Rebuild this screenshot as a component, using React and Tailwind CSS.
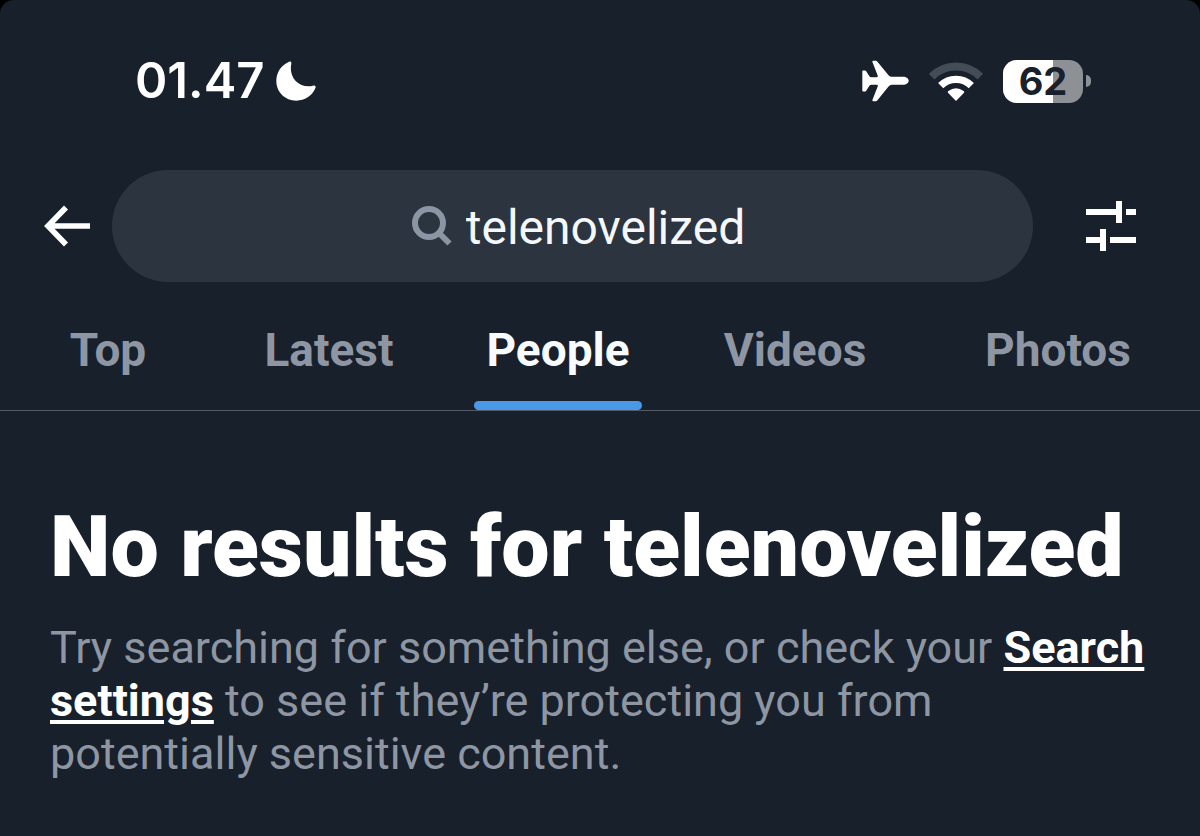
import clsx from 'clsx';

const tabs = [
  { name: 'Top', width: 'w-[216px]' },
  { name: 'Latest', width: 'w-[226px]' },
  { name: 'People', width: 'w-[232px]' },
  { name: 'Videos', width: 'w-[242px]' },
  { name: 'Photos', width: 'w-[284px]' },
];

function MoonIcon() {
  return (
    <svg className="w-10 h-10" viewBox="0 0 120 118" fill="#fff" aria-hidden="true">
      <path d="M38 2C42-1 47 1 46 7C42 26 46 45 59 59C73 73 92 78 111 73C117 72 121 76 118 81C108 104 86 118 61 118C27 118 1 92 1 59C1 34 15 12 38 2Z" />
    </svg>
  );
}

function AirplaneIcon() {
  return (
    <svg className="w-[47px] h-[42px]" viewBox="0 0 140 121" fill="#fff" aria-hidden="true">
      <path d="M1 32Q0 29 4 29H9Q11 29 12 31L22 46Q24 49 28 49H44Q48 49 47 45L31 4Q30 0 34 0H41Q44 0 46 3L79 43Q83 48 89 48H122C132 48 139 54 139 60C139 66 132 72 122 72H89Q83 72 79 77L46 118Q44 121 41 121H34Q30 121 31 117L47 76Q48 72 44 72H28Q24 72 22 75L12 90Q11 92 9 92H4Q0 92 1 89V56Z" />
    </svg>
  );
}

function WifiIcon() {
  return (
    <svg className="w-[54px] h-[39px]" viewBox="0 0 162 117" fill="none" aria-hidden="true">
      <path d="M8 44A103 103 0 0 1 154 44" stroke="#434c57" strokeWidth="24" />
      <path d="M35 71A65 65 0 0 1 127 71" stroke="#fff" strokeWidth="22" />
      <path d="M81 117L57 92Q55 89 58 87Q81 70 104 87Q107 89 105 92Z" fill="#fff" />
    </svg>
  );
}

function Battery({ level }) {
  return (
    <div className="flex items-center gap-[3px]">
      <div className="relative flex items-center justify-center w-20 h-[43px] rounded-[14px] overflow-hidden bg-[#8d9095]">
        <div className="absolute inset-y-0 left-0 bg-white" style={{ width: `${level}%` }} />
        <span className="relative font-['Inter'] font-bold text-[38px] leading-none text-[#18202b]">{level}</span>
      </div>
      <div className="w-[5px] h-3 rounded-r-full bg-[#8d9095]" />
    </div>
  );
}

function StatusBar() {
  return (
    <div className="flex items-center justify-between pt-[50px] pl-[135px] pr-[109px]">
      <div className="flex items-center gap-[11px]">
        <span className="font-['Inter'] font-semibold text-[49px] leading-[62px]">01.47</span>
        <MoonIcon />
      </div>
      <div className="flex items-center gap-5">
        <AirplaneIcon />
        <WifiIcon />
        <Battery level={62} />
      </div>
    </div>
  );
}

function SearchHeader() {
  return (
    <header className="flex items-center pt-[58px] pl-11 pr-[63px]">
      <button type="button" aria-label="Back" className="shrink-0">
        <svg className="w-[46px] h-[42px]" viewBox="0 0 46 42" fill="none" stroke="#fff" strokeWidth="5.6" aria-hidden="true">
          <path d="M46 21H4M22 2.500L4 21L22 39.500" />
        </svg>
      </button>
      <label className="flex flex-1 items-center justify-center gap-[14px] ml-[22px] mr-[52px] pl-3 h-28 rounded-full bg-[#2b343f]">
        <svg className="w-10 h-10 shrink-0" viewBox="0 0 40 40" fill="none" stroke="#8b95a3" strokeWidth="6" aria-hidden="true">
          <circle cx="17" cy="17" r="14" />
          <path d="M27 27L37.500 37.500" />
        </svg>
        <input
          type="text"
          aria-label="Search"
          defaultValue="telenovelized"
          className="field-sizing-content pt-1 bg-transparent text-[48px] leading-[60px] text-[#f4f8fc] outline-none"
        />
      </label>
      <button type="button" aria-label="Search filters" className="shrink-0">
        <svg className="w-[52px] h-[50px]" viewBox="0 0 52 50" fill="#fff" aria-hidden="true">
          <path d="M1 8H31V0H37V22H31V14H1ZM41 8H51V14H41ZM1 36H15V28H21V50H15V42H1ZM25 36H51V42H25Z" />
        </svg>
      </button>
    </header>
  );
}

function Tabs() {
  return (
    <nav role="tablist" className="flex mt-7 h-[101px] border-b border-[#535b66]">
      {tabs.map(({ name, width }) => {
        const active = name === 'People';
        return (
          <button
            key={name}
            type="button"
            role="tab"
            aria-selected={active}
            className={clsx(
              'flex flex-col items-center justify-between shrink pt-3 text-[46px] leading-[56px] font-bold',
              width,
              active ? 'text-[#f8fbfe]' : 'text-[#8e96a3]',
            )}
          >
            {name}
            {active && <span className="w-[168px] h-[9px] rounded-full bg-[#4a99e9]" />}
          </button>
        );
      })}
    </nav>
  );
}

export default function App() {
  return (
    <div className="min-h-screen bg-black">
      <div className="min-h-screen rounded-t-[14px] bg-[#18202b] font-['Roboto','Noto_Sans',sans-serif] text-white">
        <StatusBar />
        <SearchHeader />
        <Tabs />
        <main className="pl-[50px] pr-[54px] pt-[86px]">
          <h1 className="text-[86px] leading-[100px] font-black">No results for telenovelized</h1>
          <p className="mt-6 text-[45px] leading-[53px] text-[#8e96a3]">
            Try searching for something else, or check your{' '}
            <a href="#settings" className="font-bold text-white underline decoration-4 underline-offset-4">
              Search settings
            </a>{' '}
            to see if they’re protecting you from potentially sensitive content.
          </p>
        </main>
      </div>
    </div>
  );
}
